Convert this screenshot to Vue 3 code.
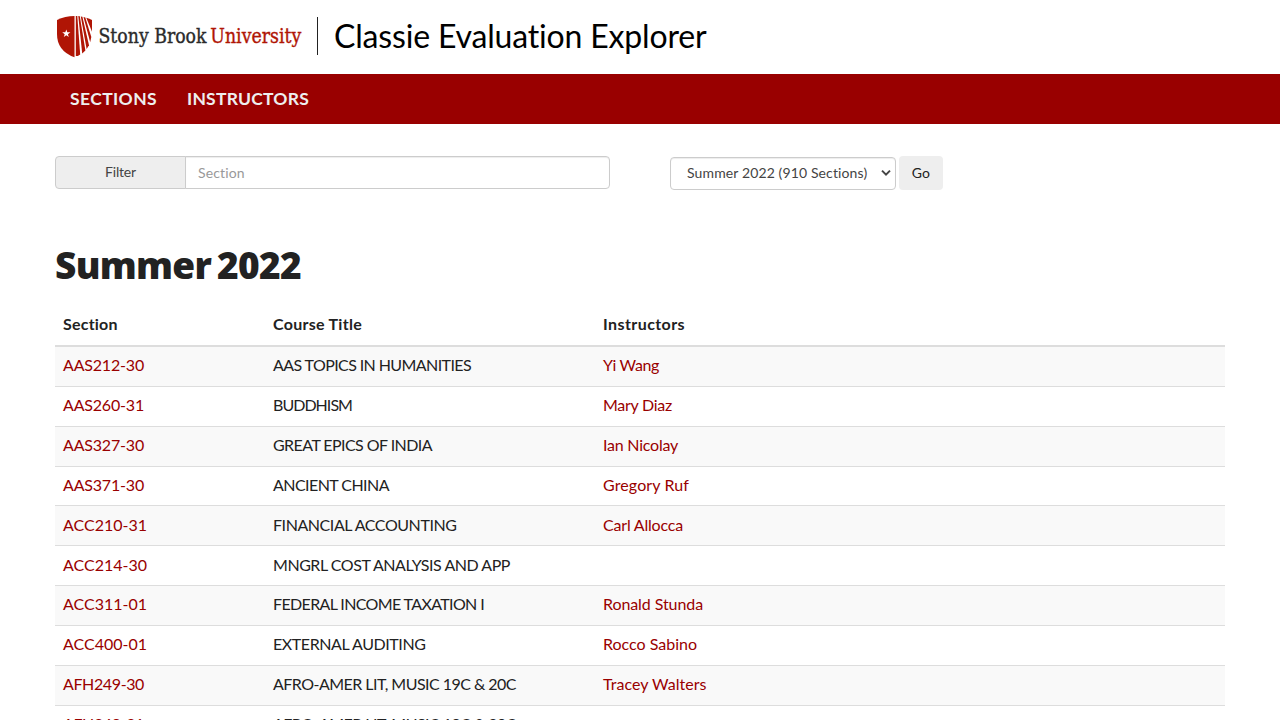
<script setup>
import { ref } from 'vue'

// Spreads the letters of a text so that it takes up the given width in pixels.
const fit = (el, { value }) => {
  if (!value) return
  el.style.letterSpacing = '0px'
  const natural = el.getBoundingClientRect().width
  const count = [...el.textContent].length
  el.style.letterSpacing = `${(value - natural) / count}px`
}
const vFit = {
  mounted(el, binding) {
    fit(el, binding)
    document.fonts.ready.then(() => fit(el, binding))
  },
}

const query = ref('')
const sections = [
  { id: 'AAS212-30', idW: 81, title: 'AAS TOPICS IN HUMANITIES', titleW: 198, who: 'Yi Wang', whoW: 56 },
  { id: 'AAS260-31', idW: 81, title: 'BUDDHISM', titleW: 79, who: 'Mary Diaz', whoW: 69 },
  { id: 'AAS327-30', idW: 81, title: 'GREAT EPICS OF INDIA', titleW: 159, who: 'Ian Nicolay', whoW: 75 },
  { id: 'AAS371-30', idW: 81, title: 'ANCIENT CHINA', titleW: 116, who: 'Gregory Ruf', whoW: 86 },
  { id: 'ACC210-31', idW: 84, title: 'FINANCIAL ACCOUNTING', titleW: 183.5, who: 'Carl Allocca', whoW: 80 },
  { id: 'ACC214-30', idW: 84, title: 'MNGRL COST ANALYSIS AND APP', titleW: 237, who: '', whoW: 0 },
  { id: 'ACC311-01', idW: 84, title: 'FEDERAL INCOME TAXATION I', titleW: 211, who: 'Ronald Stunda', whoW: 100 },
  { id: 'ACC400-01', idW: 84, title: 'EXTERNAL AUDITING', titleW: 152.5, who: 'Rocco Sabino', whoW: 94 },
  { id: 'AFH249-30', idW: 81, title: 'AFRO-AMER LIT, MUSIC 19C & 20C', titleW: 243, who: 'Tracey Walters', whoW: 103.5 },
  { id: 'AFH249-31', idW: 81, title: 'AFRO-AMER LIT, MUSIC 19C & 20C', titleW: 243, who: '', whoW: 0 },
]
</script>

<template>
  <div class="page">
    <header class="brand">
      <svg class="logo" width="250" height="46" viewBox="0 0 250 46">
        <path fill="#b01505" d="M2 7Q10 3 19.500 3V44.300Q2 38 2 21Z" />
        <path fill="#b01505" d="M20.800 3L22.300 3L25.200 41.500L22.800 43L20.800 43Z" />
        <path fill="#b01505" d="M23.300 3L24.800 3.200L30.400 37.500L27.200 40.500Z" />
        <path fill="#b01505" d="M25.800 3.400L27.400 3.700L34 32.200L31.600 36Z" />
        <path fill="#b01505" d="M28.500 4L30.300 4.400L36.300 24L35.200 29.200Z" />
        <path fill="#b01505" d="M31.300 4.700Q34.500 5.600 37 7V18.800Z" />
        <path fill="#fff" d="M11.300 16.400L12.300 19.300H15.400L12.900 21.200L13.800 24.100L11.300 22.300L8.800 24.100L9.700 21.200L7.200 19.300H10.300Z" />
        <text class="logo-dark" x="43.500" y="30" textLength="108" lengthAdjust="spacingAndGlyphs">Stony Brook</text>
        <text class="logo-red" x="155.300" y="30" textLength="91" lengthAdjust="spacingAndGlyphs">University</text>
      </svg>
      <span class="divider"></span>
      <span class="app-name"><span v-fit="373">Classie Evaluation Explorer</span></span>
    </header>

    <nav class="nav">
      <a><span v-fit="87">SECTIONS</span></a>
      <a><span v-fit="122">INSTRUCTORS</span></a>
    </nav>

    <main class="content">
      <div class="controls">
        <div class="filter">
          <label for="query"><span v-fit="31">Filter</span></label>
          <input id="query" v-model="query" placeholder="Section" />
        </div>
        <form class="term" @submit.prevent>
          <button type="button" class="select">
            <span v-fit="180.500">Summer 2022 (910 Sections)</span>
            <svg width="12" height="10" viewBox="0 0 12 10"><path d="M2 2.600L6 6.600L10 2.600" fill="none" stroke="#444" stroke-width="2" /></svg>
          </button>
          <button class="go"><span v-fit="18.500">Go</span></button>
        </form>
      </div>

      <h1><span v-fit="246">Summer 2022</span></h1>

      <table>
        <thead>
          <tr>
            <th class="c-id"><span v-fit="55">Section</span></th>
            <th class="c-title"><span v-fit="89">Course Title</span></th>
            <th><span v-fit="82">Instructors</span></th>
          </tr>
        </thead>
        <tbody>
          <tr v-for="s in sections" :key="s.id">
            <td><a><span v-fit="s.idW">{{ s.id }}</span></a></td>
            <td><span v-fit="s.titleW">{{ s.title }}</span></td>
            <td><a v-if="s.who"><span v-fit="s.whoW">{{ s.who }}</span></a></td>
          </tr>
        </tbody>
      </table>
    </main>
  </div>
</template>

<style>
html,
body {
  overflow: hidden;
}
</style>

<style scoped>
.page {
  height: 720px;
  overflow: hidden;
  background: #fff;
  color: #222;
  font: 16px/1.42857 Lato, "Noto Sans", sans-serif;
  white-space: nowrap;
}
.page * {
  box-sizing: border-box;
}
.brand {
  display: flex;
  height: 74px;
  padding: 13px 55px 0;
}
.logo {
  flex: none;
  overflow: visible;
}
.logo text {
  font: 21px "DejaVu Serif", serif;
  stroke-width: 0.4px;
}
.logo-dark {
  fill: #2b2b2b;
  stroke: #2b2b2b;
}
.logo-red {
  fill: #b01505;
  stroke: #b01505;
}
.divider {
  width: 1px;
  height: 38px;
  margin: 4px 16px 0 12px;
  background: #222;
}
.app-name {
  color: #000;
  font-size: 32px;
  line-height: 46px;
}
.nav {
  display: flex;
  gap: 30px;
  height: 50px;
  padding: 0 70px;
  background: #900;
  color: #eee;
  font-size: 17.500px;
  font-weight: 700;
  line-height: 50px;
}
.content {
  padding: 32px 55px 0;
}
.controls {
  display: flex;
  gap: 60px;
  height: 34px;
  font-size: 14px;
}
.filter {
  display: flex;
  width: 555px;
  height: 33px;
}
.filter label {
  width: 131px;
  border: 1px solid #ccc;
  border-radius: 4px 0 0 4px;
  background: #eee;
  color: #444;
  line-height: 30px;
  text-align: center;
}
.filter input {
  flex: 1;
  min-width: 0;
  margin-left: -1px;
  padding: 0 12px 1px;
  border: 1px solid #ccc;
  border-radius: 0 4px 4px 0;
  outline: 0;
  box-shadow: inset 0 1px 1px rgba(0, 0, 0, 0.075);
  font: 14px Lato, sans-serif;
  letter-spacing: 0.15px;
}
.filter input::placeholder {
  color: #999;
}
.term {
  display: flex;
  gap: 3px;
}
.term button {
  font: 14px/32px Lato, sans-serif;
}
.select {
  display: flex;
  align-items: center;
  justify-content: space-between;
  width: 226px;
  height: 33px;
  margin-top: 1px;
  padding: 0 3px 1px 16px;
  border: 1px solid #ccc;
  border-radius: 4px;
  background: #fff;
  box-shadow: inset 0 1px 1px rgba(0, 0, 0, 0.075);
  color: #444;
}
.go {
  width: 44px;
  height: 34px;
  padding: 0 0 1px;
  border: 0;
  border-radius: 4px;
  background: #eee;
  color: #222;
}
h1 {
  margin: 49px 0 15px;
  font: 900 37px/52px "Noto Sans", sans-serif;
  word-spacing: -3px;
}
table {
  width: 100%;
  table-layout: fixed;
  border-collapse: collapse;
}
th,
td {
  height: 39.857px;
  padding: 0 8px 1.500px;
  line-height: 22.857px;
  text-align: left;
}
th {
  border-bottom: 2px solid #ddd;
  font-weight: 700;
}
td {
  border-top: 1px solid #ddd;
}
tbody tr:first-child td {
  height: 40.570px;
}
.c-id {
  width: 210px;
}
.c-title {
  width: 330px;
}
tbody tr:nth-child(odd) {
  background: #f9f9f9;
}
td a {
  color: #900;
}
</style>
